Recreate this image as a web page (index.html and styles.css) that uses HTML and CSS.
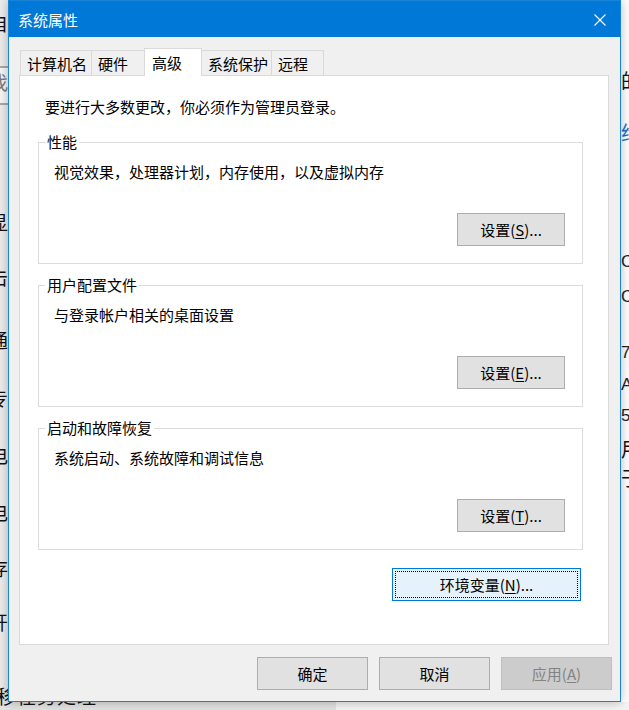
FILE: index.html
```html
<!DOCTYPE html>
<html lang="zh-CN">
<head>
<meta charset="utf-8">
<title>系统属性</title>
<link rel="stylesheet" href="styles.css">
</head>
<body>
<div class="desktop">
  <div class="behind">
    <div class="strip-left"></div>
    <div class="strip-right"></div>
    <div class="strip-bottom"></div>
    <div class="searchbox"></div>
    <span class="frag fl f1">自</span>
    <span class="frag fl f2 grey">找</span>
    <span class="frag fl f3">显</span>
    <span class="frag fl f4">击</span>
    <span class="frag fl f5">通</span>
    <span class="frag fl f6">专</span>
    <span class="frag fl f7">电</span>
    <span class="frag fl f8">电</span>
    <span class="frag fl f9">存</span>
    <span class="frag fl f10">开</span>
    <span class="frag bottom-line">移任务处理</span>
    <span class="frag fr r1">的</span>
    <span class="frag fr r2 link">给</span>
    <span class="frag fr r3 latin">C</span>
    <span class="frag fr r4 latin">Co</span>
    <span class="frag fr r5 latin">7</span>
    <span class="frag fr r6 latin">A</span>
    <span class="frag fr r7 latin">52</span>
    <span class="frag fr r8">用</span>
    <span class="frag fr r9">于</span>
  </div>

  <div class="dialog">
    <div class="titlebar">
      <span class="title">系统属性</span>
      <span class="close">
        <svg width="12" height="12" viewBox="0 0 12 12"><path d="M0.5 0.5 L11.5 11.5 M11.5 0.5 L0.5 11.5" stroke="#fff" stroke-width="1.1" fill="none"/></svg>
      </span>
    </div>
    <div class="body">
      <div class="tabs">
        <div class="tab w1">计算机名</div>
        <div class="tab w2">硬件</div>
        <div class="tab active w3">高级</div>
        <div class="tab w4">系统保护</div>
        <div class="tab w5">远程</div>
      </div>
      <div class="panel">
        <p class="note">要进行大多数更改，你必须作为管理员登录。</p>
        <div class="groups">
          <div class="group">
            <span class="legend">性能</span>
            <p class="desc">视觉效果，处理器计划，内存使用，以及虚拟内存</p>
            <button class="btn set">设置(<u>S</u>)...</button>
          </div>
          <div class="group">
            <span class="legend">用户配置文件</span>
            <p class="desc">与登录帐户相关的桌面设置</p>
            <button class="btn set">设置(<u>E</u>)...</button>
          </div>
          <div class="group">
            <span class="legend">启动和故障恢复</span>
            <p class="desc">系统启动、系统故障和调试信息</p>
            <button class="btn set">设置(<u>T</u>)...</button>
          </div>
        </div>
        <div class="env-row">
          <button class="btn env"><span class="focus">环境变量(<u>N</u>)...</span></button>
        </div>
      </div>
      <div class="footer">
        <button class="btn foot">确定</button>
        <button class="btn foot">取消</button>
        <button class="btn foot" disabled>应用(<u>A</u>)</button>
      </div>
    </div>
  </div>
</div>
</body>
</html>
```

FILE: styles.css
```css
* { box-sizing: border-box; }
html, body { margin: 0; padding: 0; }
body {
  width: 629px;
  height: 710px;
  overflow: hidden;
  font-family: "Noto Sans CJK SC", "Microsoft YaHei", sans-serif;
  font-size: 15px;
  color: #000;
}
.desktop {
  position: relative;
  width: 629px;
  height: 710px;
  overflow: hidden;
  background: #f4f4f4;
}

/* windows behind the dialog */
.behind { position: absolute; inset: 0; }
.strip-left { position: absolute; left: 0; top: 0; width: 40px; height: 702px; background: #ececec; }
.strip-right { position: absolute; left: 600px; top: 0; width: 29px; height: 702px; background: #ffffff; }
.strip-bottom { position: absolute; left: 0; top: 690px; width: 336px; height: 20px; background: #e2e2e2; }
.searchbox { position: absolute; left: 0; top: 66px; width: 30px; height: 39px; border-top: 2px solid #a8a8a8; border-bottom: 2px solid #a8a8a8; background: #f6f6f6; }
.frag { position: absolute; font-size: 19px; line-height: 22px; color: #111; white-space: nowrap; }
.fl { left: -11px; }
.grey { color: #7a7a7a; }
.f1 { top: 12px; }
.f2 { top: 71px; }
.f3 { top: 211px; }
.f4 { top: 266px; }
.f5 { top: 329px; }
.f6 { top: 387px; }
.f7 { top: 444px; }
.f8 { top: 501px; }
.f9 { top: 557px; }
.f10 { top: 611px; }
.bottom-line { left: -3px; top: 685px; letter-spacing: 1px; }
.fr { left: 621px; font-size: 20px; }
.latin { font-family: "Liberation Sans", sans-serif; font-size: 17px; color: #222; }
.link { color: #1a6fc9; }
.r1 { top: 70px; }
.r2 { top: 122px; }
.r3 { top: 251px; }
.r4 { top: 286px; }
.r5 { top: 342px; }
.r6 { top: 374px; }
.r7 { top: 405px; }
.r8 { top: 438px; }
.r9 { top: 467px; }

/* dialog */
.dialog {
  position: absolute;
  left: 8px;
  top: 0;
  width: 613px;
  height: 702px;
  border: 1px solid #1883d7;
  background: #f0f0f0;
  display: flex;
  flex-direction: column;
  box-shadow: 0 0 10px rgba(0, 0, 0, 0.28);
}
.titlebar {
  height: 36px;
  flex: none;
  background: #0078d7;
  color: #fff;
  display: flex;
  align-items: center;
  justify-content: space-between;
  padding: 2px 14px 0 9px;
}
.title { font-size: 15px; line-height: 20px; }
.close { display: flex; width: 12px; height: 12px; }
.close svg { display: block; }

.body {
  flex: 1;
  display: flex;
  flex-direction: column;
  padding: 11px 8px 11px 10px;
}

.tabs {
  display: flex;
  align-items: flex-end;
  height: 27px;
  margin-left: 1px;
}
.tab {
  height: 25px;
  border: 1px solid #d9d9d9;
  border-bottom: 0;
  background: #f0f0f0;
  margin-left: -1px;
  padding: 1px 0 0 6px;
  line-height: 20px;
  display: flex;
  align-items: center;
  white-space: nowrap;
}
.tab:first-child { margin-left: 0; }
.tab.active {
  height: 28px;
  margin-bottom: -1px;
  background: #fff;
  position: relative;
  z-index: 1;
  padding-left: 7px;
  padding-top: 0;
}
.w1 { width: 72px; }
.w2 { width: 54px; }
.w3 { width: 58px; }
.w4 { width: 71px; }
.w5 { width: 53px; }

.panel {
  height: 570px;
  flex: none;
  margin-right: 3px;
  background: #fff;
  border: 1px solid #d9d9d9;
  padding: 21px 25px 0 18px;
  display: flex;
  flex-direction: column;
}
.note { margin: 0 0 25px 7px; line-height: 20px; }
.groups { display: flex; flex-direction: column; gap: 21px; }
.group {
  position: relative;
  height: 122px;
  border: 1px solid #dcdcdc;
  padding: 19px 17px 17px 15px;
  display: flex;
  flex-direction: column;
}
.legend {
  position: absolute;
  top: -11px;
  left: 6px;
  padding: 0 2px;
  background: #fff;
  line-height: 20px;
}
.desc { margin: 0; line-height: 20px; }

.btn {
  font-family: inherit;
  font-size: 15px;
  color: #000;
  background: #e1e1e1;
  border: 1px solid #adadad;
  padding: 0;
  margin: 0;
  line-height: 20px;
  height: 33px;
  display: flex;
  align-items: center;
  justify-content: center;
  white-space: nowrap;
}
.btn u { text-underline-offset: 2px; }
.set { width: 108px; align-self: flex-end; margin-top: 31px; }

.env-row { display: flex; justify-content: flex-end; margin-top: 18px; margin-right: 2px; }
.env {
  width: 189px;
  background: #e5f1fb;
  border-color: #0078d7;
  align-items: stretch;
}
.focus {
  flex: 1;
  margin: 2px;
  border: 1px dotted #000;
  display: flex;
  align-items: center;
  justify-content: center;
}

.footer {
  display: flex;
  justify-content: flex-end;
  gap: 11px;
  margin-top: 12px;
}
.foot { width: 111px; }
.foot:disabled {
  background: #cccccc;
  border-color: #bfbfbf;
  color: #838383;
}
```
